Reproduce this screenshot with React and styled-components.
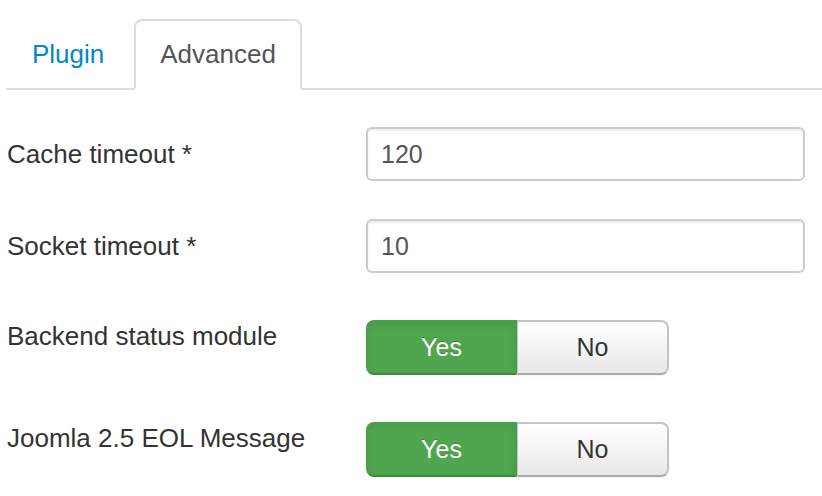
import React from "react";
import styled, { createGlobalStyle } from "styled-components";

const Global = createGlobalStyle`
  html, body {
    margin: 0;
    padding: 0;
    background: #fff;
  }
  body {
    font-family: "Liberation Sans", Arial, Helvetica, sans-serif;
    color: #333;
  }
`;

const Page = styled.div`
  width: 822px;
  height: 496px;
  padding-left: 6px;
  box-sizing: border-box;
  overflow: hidden;
`;

const TabBar = styled.ul`
  display: flex;
  margin: 0;
  padding: 19px 0 0 0;
  list-style: none;
  border-bottom: 2px solid #ddd;
`;

const Tab = styled.li`
  display: flex;
  align-items: center;
  box-sizing: border-box;
  height: 71px;
  margin: 0 4px -2px 0;
  padding: 0 24px;
  font-size: 26px;
  border: 2px solid ${(p) => (p.$active ? "#ddd" : "transparent")};
  border-bottom-color: ${(p) => (p.$active ? "#fff" : "transparent")};
  border-radius: 8px 8px 0 0;
  background: ${(p) => (p.$active ? "#fff" : "transparent")};
  color: ${(p) => (p.$active ? "#555" : "#0088cc")};
  cursor: pointer;
`;

const Form = styled.div`
  display: flex;
  flex-direction: column;
  margin-top: 37px;
`;

const Row = styled.div`
  display: flex;
  align-items: flex-start;
  margin-bottom: ${(p) => p.$gap}px;
`;

const Label = styled.label`
  width: 360px;
  padding: ${(p) => p.$offset}px 0 0 1px;
  box-sizing: border-box;
  font-size: 26px;
  line-height: 32px;
  color: #333;
`;

const Input = styled.input`
  box-sizing: border-box;
  width: 439px;
  height: 54px;
  padding: 0 13px;
  font-family: inherit;
  font-size: 25px;
  color: #555;
  background: #fff;
  border: 2px solid #ccc;
  border-radius: 6px;
  box-shadow: inset 0 2px 2px rgba(0, 0, 0, 0.075);
  outline: none;
`;

const Toggle = styled.div`
  display: flex;
  height: 55px;
`;

const ToggleBtn = styled.button`
  box-sizing: border-box;
  width: ${(p) => (p.$on ? 151 : 152)}px;
  height: 100%;
  font-family: inherit;
  font-size: 25px;
  cursor: pointer;
  color: ${(p) => (p.$on ? "#fff" : "#333")};
  background: ${(p) =>
    p.$on ? "#4fa64f" : "linear-gradient(to bottom, #ffffff, #e8e8e8)"};
  border: 2px solid ${(p) => (p.$on ? "#48a048" : "#c4c4c4")};
  border-bottom-color: ${(p) => (p.$on ? "#3a8a3a" : "#a9a9a9")};
  border-radius: ${(p) => (p.$on ? "8px 0 0 8px" : "0 8px 8px 0")};
  border-left-width: ${(p) => (p.$on ? "2px" : "1px")};
  box-shadow: ${(p) =>
    p.$on
      ? "inset 0 3px 6px rgba(0,0,0,0.08)"
      : "inset 0 1px 0 rgba(255,255,255,0.2), 0 1px 2px rgba(0,0,0,0.05)"};
  text-shadow: ${(p) =>
    p.$on ? "0 -1px 0 rgba(0,0,0,0.2)" : "0 1px 1px rgba(255,255,255,0.75)"};
`;

const YesNo = ({ value }) => (
  <Toggle>
    <ToggleBtn $on={value}>Yes</ToggleBtn>
    <ToggleBtn $on={!value}>No</ToggleBtn>
  </Toggle>
);

const App = () => {
  return (
    <Page>
      <Global />
      <TabBar>
        <Tab>Plugin</Tab>
        <Tab $active>Advanced</Tab>
      </TabBar>
      <Form>
        <Row $gap={38}>
          <Label $offset={11}>Cache timeout *</Label>
          <Input defaultValue="120" />
        </Row>
        <Row $gap={47}>
          <Label $offset={11}>Socket timeout *</Label>
          <Input defaultValue="10" />
        </Row>
        <Row $gap={47}>
          <Label $offset={0}>Backend status module</Label>
          <YesNo value />
        </Row>
        <Row $gap={0}>
          <Label $offset={0}>Joomla 2.5 EOL Message</Label>
          <YesNo value />
        </Row>
      </Form>
    </Page>
  );
};

export default App;
